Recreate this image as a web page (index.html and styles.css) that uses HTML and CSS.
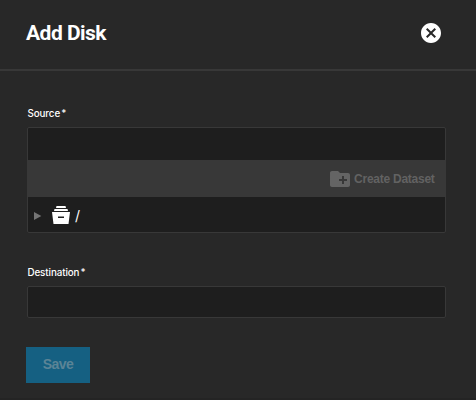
FILE: index.html
```html
<!DOCTYPE html>
<html lang="en">
<head>
<meta charset="utf-8">
<title>Add Disk</title>
<link rel="stylesheet" href="styles.css">
</head>
<body>
<header class="header">
  <h1 class="title">Add Disk</h1>
  <button class="close" aria-label="Close">
    <svg width="24" height="24" viewBox="0 0 24 24" fill="#fff"><path d="M12 2C6.47 2 2 6.47 2 12s4.47 10 10 10 10-4.47 10-10S17.53 2 12 2zm5 13.59L15.59 17 12 13.41 8.41 17 7 15.59 10.59 12 7 8.41 8.41 7 12 10.59 15.59 7 17 8.41 13.41 12 17 15.59z"/></svg>
  </button>
</header>
<form class="form">
  <label class="label source-label">Source *</label>
  <div class="explorer">
    <div class="explorer-input"></div>
    <div class="toolbar">
      <svg width="24" height="24" viewBox="0 0 24 24" fill="#646464"><path d="M20 6h-8l-2-2H4c-1.11 0-1.99.89-1.99 2L2 18c0 1.11.89 2 2 2h16c1.11 0 2-.89 2-2V8c0-1.11-.89-2-2-2zm-1 8h-3v3h-2v-3h-3v-2h3V9h2v3h3v2z"/></svg>
      <span class="create">Create Dataset</span>
    </div>
    <div class="tree-row">
      <svg class="arrow" width="8" height="8" viewBox="0 0 8 8"><path d="M0 0L7.3 4L0 8z" fill="#757575"/></svg>
      <svg class="dataset" width="18" height="18" viewBox="0 0 18 18" fill="#fff"><path d="M4.5 0h9l.5 2H4zM2.5 3h13l.5 2H2zM0 6h18l-1.5 12h-15zM6 10.5v1.6h6v-1.6z" fill-rule="evenodd"/></svg>
      <span class="root">/</span>
    </div>
  </div>
  <label class="label destination-label" for="destination">Destination *</label>
  <input class="input" id="destination" type="text">
  <button class="save" type="button">Save</button>
</form>
</body>
</html>
```

FILE: styles.css
```css
* { box-sizing: border-box; }
body {
  margin: 0;
  height: 400px;
  overflow: hidden;
  background: #282828;
  border-bottom: 2px solid #242424;
  color: #fff;
  font-family: Inter, "Liberation Sans", sans-serif;
}
.header {
  display: flex;
  align-items: center;
  justify-content: space-between;
  height: 71px;
  padding: 0 33px 5px 26px;
  border-bottom: 2px solid #383838;
}
.title {
  margin: 2px 0 0;
  font: 700 21px/28px Roboto, sans-serif;
  letter-spacing: -0.52px;
}
.close {
  display: flex;
  padding: 0;
  border: 0;
  background: none;
}
.close svg { margin-top: 2px; }
.form {
  display: flex;
  flex-direction: column;
  padding: 36px 30px 0 27px;
}
.label {
  height: 12px;
  padding-left: 0.5px;
  font-size: 9.8px;
  line-height: 13px;
  font-weight: 500;
  letter-spacing: -0.1px;
  word-spacing: -1.3px;
}
.explorer {
  margin-top: 8px;
  height: 106px;
  border: 1px solid #383838;
  border-radius: 2px;
  background: #1e1e1e;
}
.explorer-input { height: 32px; }
.toolbar {
  display: flex;
  align-items: center;
  justify-content: flex-end;
  gap: 2px;
  height: 37px;
  padding-right: 10.4px;
  background: #383838;
}
.create {
  color: #626262;
  font: 700 12px/16px "Liberation Sans", sans-serif;
  letter-spacing: -0.25px;
}
.tree-row {
  display: flex;
  align-items: center;
  height: 35px;
  padding-left: 6px;
}
.arrow { margin: 2px 10px 0 0; }
.dataset { margin-right: 5px; }
.root { margin-top: 2px; font-size: 14px; line-height: 18px; }
.destination-label { margin-top: 33px; }
.input {
  height: 32px;
  margin: 8px 0 0;
  padding: 0 8px;
  border: 1px solid #383838;
  border-radius: 2px;
  background: #1e1e1e;
  color: #fff;
}
.save {
  width: 64px;
  height: 36px;
  margin: 29px 0 0 -1px;
  padding: 0 0 2px;
  border: 0;
  background: #156082;
  color: #5b8496;
  font: 700 14px/34px "Liberation Sans", sans-serif;
  letter-spacing: -0.5px;
}
```
